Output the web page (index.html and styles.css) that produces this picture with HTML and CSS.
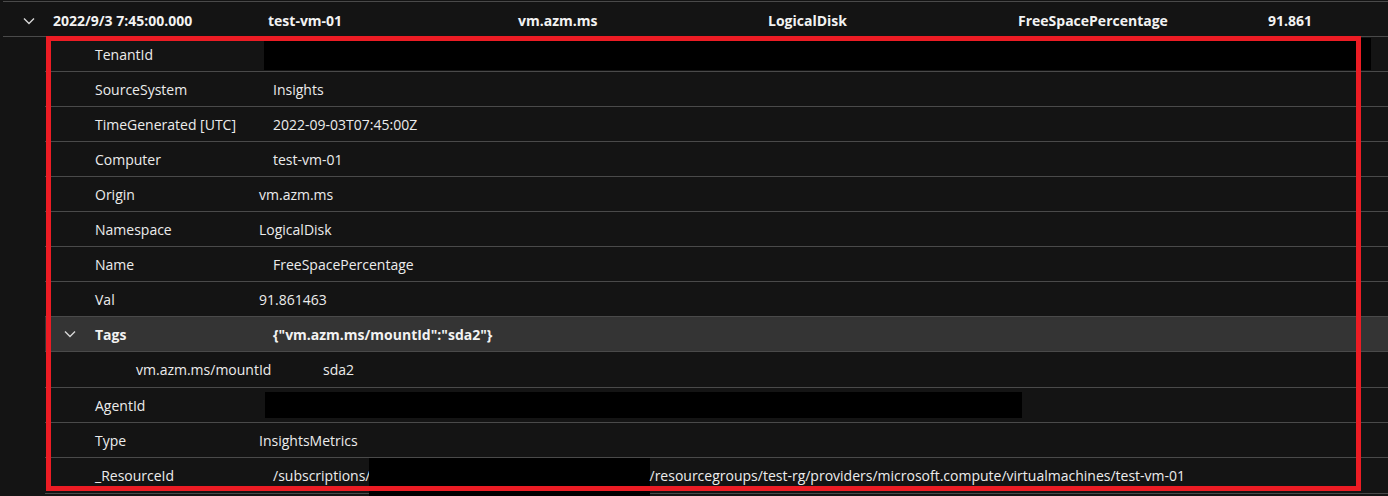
FILE: index.html
```html
<!DOCTYPE html>
<html lang="en">
<head>
<meta charset="utf-8">
<title>Log record</title>
<link rel="stylesheet" href="styles.css">
</head>
<body>
<div class="table">
  <div class="mrow">
    <div class="chev-cell">
      <svg class="chev" width="12" height="8" viewBox="0 0 12 8"><path d="M1 1.5 L6 6.5 L11 1.5" fill="none" stroke="#d6d6d6" stroke-width="1.4"/></svg>
    </div>
    <div class="mc mc1">2022/9/3 7:45:00.000</div>
    <div class="mc">test-vm-01</div>
    <div class="mc">vm.azm.ms</div>
    <div class="mc">LogicalDisk</div>
    <div class="mc">FreeSpacePercentage</div>
    <div class="mc mc-last">91.861</div>
  </div>
  <div class="details">
    <div class="drow"><div class="k">TenantId</div><div class="v v-tight"><span class="redact r-tenant"></span></div></div>
    <div class="drow"><div class="k">SourceSystem</div><div class="v">Insights</div></div>
    <div class="drow"><div class="k">TimeGenerated [UTC]</div><div class="v">2022-09-03T07:45:00Z</div></div>
    <div class="drow"><div class="k">Computer</div><div class="v">test-vm-01</div></div>
    <div class="drow"><div class="k">Origin</div><div class="v v-tight">vm.azm.ms</div></div>
    <div class="drow"><div class="k">Namespace</div><div class="v v-tight">LogicalDisk</div></div>
    <div class="drow"><div class="k">Name</div><div class="v">FreeSpacePercentage</div></div>
    <div class="drow"><div class="k">Val</div><div class="v v-tight">91.861463</div></div>
    <div class="drow drow-tags">
      <div class="k k-tags"><svg class="chev" width="12" height="8" viewBox="0 0 12 8"><path d="M1 1.5 L6 6.5 L11 1.5" fill="none" stroke="#d6d6d6" stroke-width="1.4"/></svg><span>Tags</span></div>
      <div class="v">{"vm.azm.ms/mountId":"sda2"}</div>
    </div>
    <div class="drow drow-sub"><div class="k k-sub">vm.azm.ms/mountId</div><div class="v v-sub">sda2</div></div>
    <div class="drow"><div class="k">AgentId</div><div class="v v-tight"><span class="redact r-agent"></span></div></div>
    <div class="drow"><div class="k">Type</div><div class="v v-tight">InsightsMetrics</div></div>
    <div class="drow drow-last"><div class="k">_ResourceId</div><div class="v"><span>/subscriptions/</span><span class="redact r-res"></span><span>/resourcegroups/test-rg/providers/microsoft.compute/virtualmachines/test-vm-01</span></div></div>
  </div>
  <div class="highlight"></div>
</div>
</body>
</html>
```

FILE: styles.css
```css
html, body {
  margin: 0;
  padding: 0;
  background: #141414;
}

body {
  font-family: "Segoe UI", "Open Sans", "Noto Sans", sans-serif;
  font-size: 14px;
  color: #ececec;
  overflow: hidden;
}

.table {
  position: relative;
  padding-top: 1px;
  height: 495px;
  overflow: hidden;
}

.mrow {
  display: flex;
  align-items: center;
  margin-left: 3px;
  height: 31px;
  padding-top: 3px;
  border-top: 1px solid #4a4a4a;
  border-bottom: 1px solid #4a4a4a;
  font-weight: 700;
  color: #f2f2f2;
}

.chev-cell {
  width: 50px;
  flex: none;
  display: flex;
  align-items: center;
  padding-left: 20px;
  box-sizing: border-box;
}

.mc {
  width: 250px;
  flex: none;
  white-space: nowrap;
}

.mc1 {
  width: 215px;
}

.mc-last {
  width: auto;
  flex: 1;
  min-width: 0;
}

.details {
  margin-left: 45px;
}

.drow {
  display: flex;
  align-items: center;
  height: 34px;
  border-bottom: 1px solid #4a4a4a;
  white-space: nowrap;
}

.drow-sub,
.drow-last {
  height: 35px;
}

.drow-tags {
  background: #343434;
  font-weight: 700;
  color: #f2f2f2;
}

.k {
  width: 214px;
  flex: none;
  box-sizing: border-box;
  padding-left: 50px;
}

.k-tags {
  display: flex;
  align-items: center;
  padding-left: 19px;
}

.k-tags .chev {
  margin-right: 19px;
}

.k-sub {
  width: 278px;
  padding-left: 91px;
}

.v {
  flex: 1;
  align-self: stretch;
  display: flex;
  align-items: center;
  padding-left: 14px;
  min-width: 0;
}

.v-tight,
.v-sub {
  padding-left: 0;
}

.redact {
  display: block;
  background: #000;
  flex: none;
}

.r-tenant {
  width: 1107px;
  height: 32px;
  margin-left: 5px;
}

.r-agent {
  width: 757px;
  height: 26px;
  margin-left: 6px;
}

.r-res {
  width: 281px;
  align-self: stretch;
  margin-left: -2px;
  margin-bottom: -3px;
}

.highlight {
  position: absolute;
  left: 46px;
  top: 36px;
  width: 1305px;
  height: 445px;
  border: 5px solid #ec1c24;
  pointer-events: none;
}
```
